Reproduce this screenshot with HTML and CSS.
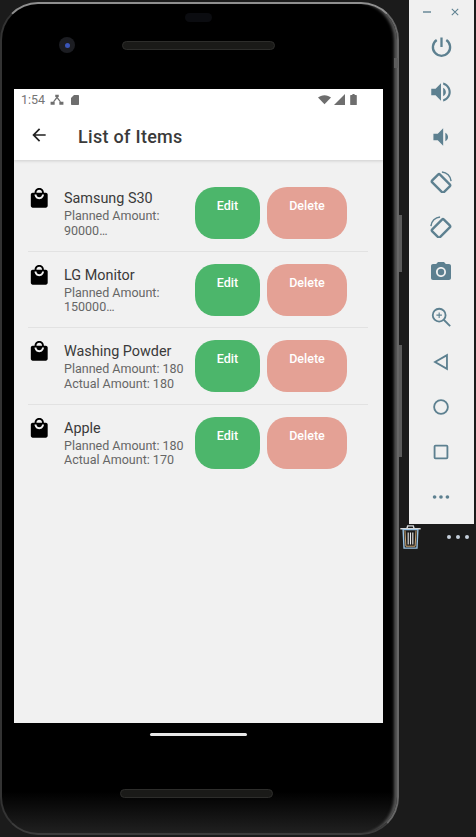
FILE: index.html
```html
<!DOCTYPE html>
<html lang="en">
<head>
  <meta charset="UTF-8" />
  <meta name="viewport" content="width=device-width, initial-scale=1.0"/>
  <title>List of Items</title>
  <link rel="stylesheet" href="styles.css">
</head>
<body>
  <svg class="sprites" width="0" height="0">
    <symbol id="bag" viewBox="0 0 24 24"><path d="M19 6h-2c0-2.76-2.24-5-5-5S7 3.24 7 6H5c-1.1 0-1.99.9-1.99 2L3 20c0 1.1.9 2 2 2h14c1.1 0 2-.9 2-2V8c0-1.1-.9-2-2-2zm-7-3c1.66 0 3 1.34 3 3H9c0-1.66 1.34-3 3-3zm0 10c-2.76 0-5-2.24-5-5h2c0 1.66 1.34 3 3 3s3-1.34 3-3h2c0 2.76-2.24 5-5 5z"/></symbol>
  </svg>

  <div class="phone">
    <div class="key power-key"></div>
    <div class="key upper-key"></div>
    <div class="key lower-key"></div>

    <div class="bezel-top">
      <div class="sensor"></div>
      <div class="camera-row">
        <div class="camera"><div class="lens"></div></div>
        <div class="speaker"></div>
      </div>
    </div>

    <div class="screen">
      <div class="header">
        <div class="status-bar">
          <span class="time">1:54</span>
          <svg class="status-icon" viewBox="0 0 24 24"><path d="M9 3h6v4H9z"/><path d="M11 7h2l6 8h-2.500L12 9.500 7.500 15H5z"/><path d="M1 15h7v5H1zM16 15h7v5h-7z"/></svg>
          <svg class="status-icon sd" viewBox="0 0 24 24"><path d="M18 2h-8L4 8v12c0 1.100.9 2 2 2h12c1.100 0 2-.9 2-2V4c0-1.100-.9-2-2-2z"/></svg>
          <span class="status-right">
            <svg class="wifi" viewBox="0 0 24 18"><path d="M12 17 0 4.500C3 1.800 7.300 0 12 0s9 1.800 12 4.500z"/></svg>
            <svg class="signal" viewBox="0 0 20 20"><path d="M0 20 20 0v20z"/></svg>
            <svg class="battery" viewBox="0 0 12 20"><path d="M4 0h4v2h3c.6 0 1 .4 1 1v16c0 .6-.4 1-1 1H1c-.6 0-1-.4-1-1V3c0-.6.4-1 1-1h3z"/></svg>
          </span>
        </div>
        <div class="app-bar">
          <svg class="back" viewBox="0 0 24 24"><path d="M20 11H7.830l5.590-5.590L12 4l-8 8 8 8 1.410-1.410L7.830 13H20v-2z"/></svg>
          <h1>List of Items</h1>
        </div>
      </div>

      <div class="list">
        <div class="item">
          <svg class="bag"><use href="#bag"/></svg>
          <div class="info">
            <div class="name">Samsung S30</div>
            <div class="amount">Planned Amount: 90000…</div>
          </div>
          <button class="btn edit">Edit</button>
          <button class="btn delete">Delete</button>
        </div>
        <div class="item">
          <svg class="bag"><use href="#bag"/></svg>
          <div class="info">
            <div class="name">LG Monitor</div>
            <div class="amount">Planned Amount: 150000…</div>
          </div>
          <button class="btn edit">Edit</button>
          <button class="btn delete">Delete</button>
        </div>
        <div class="item">
          <svg class="bag"><use href="#bag"/></svg>
          <div class="info">
            <div class="name">Washing Powder</div>
            <div class="amount">Planned Amount: 180</div>
            <div class="amount">Actual Amount: 180</div>
          </div>
          <button class="btn edit">Edit</button>
          <button class="btn delete">Delete</button>
        </div>
        <div class="item">
          <svg class="bag"><use href="#bag"/></svg>
          <div class="info">
            <div class="name">Apple</div>
            <div class="amount">Planned Amount: 180</div>
            <div class="amount">Actual Amount: 170</div>
          </div>
          <button class="btn edit">Edit</button>
          <button class="btn delete">Delete</button>
        </div>
      </div>
    </div>

    <div class="bezel-bottom">
      <div class="home-pill"></div>
      <div class="speaker bottom"></div>
    </div>
  </div>

  <div class="side">
    <div class="toolbar">
      <div class="window-row">
        <span class="minimize"></span>
        <svg class="close" viewBox="0 0 10 10"><path d="M1 1l8 8M9 1l-8 8"/></svg>
      </div>
      <div class="tool">
        <svg viewBox="0 0 24 24" class="line power"><path d="M12 2.500v10M7 5.200a9 9 0 1 0 10 0"/></svg>
      </div>
      <div class="tool">
        <svg viewBox="0 0 24 24" class="big"><path d="M3 9v6h4l5 5V4L7 9H3zm13.500 3c0-1.770-1.020-3.290-2.500-4.030v8.050c1.480-.73 2.500-2.250 2.500-4.020zM14 3.230v2.060c2.890.86 5 3.540 5 6.710s-2.110 5.850-5 6.710v2.060c4.010-.91 7-4.490 7-8.770s-2.990-7.860-7-8.770z"/></svg>
      </div>
      <div class="tool">
        <svg viewBox="0 0 24 24" class="big"><path d="M18.500 12c0-1.770-1.020-3.290-2.500-4.030v8.050c1.480-.73 2.500-2.250 2.500-4.020zM5 9v6h4l5 5V4L9 9H5z"/></svg>
      </div>
      <div class="tool">
        <svg viewBox="0 0 24 24"><rect class="hollow" x="6" y="4.500" width="12" height="18" rx="1.500" transform="rotate(-45 12 13.500)"/><path class="thin" d="M13 1a11 11 0 0 1 10 10"/></svg>
      </div>
      <div class="tool">
        <svg viewBox="0 0 24 24"><rect class="hollow" x="6" y="4.500" width="12" height="18" rx="1.500" transform="rotate(45 12 13.500)"/><path class="thin" d="M11 1A11 11 0 0 0 1 11"/></svg>
      </div>
      <div class="tool">
        <svg viewBox="0 0 24 24" class="camera-icon"><path d="M9 2 7.170 4H4c-1.100 0-2 .9-2 2v12c0 1.100.9 2 2 2h16c1.100 0 2-.9 2-2V6c0-1.100-.9-2-2-2h-3.170L15 2H9zm3 15c-2.760 0-5-2.240-5-5s2.240-5 5-5 5 2.240 5 5-2.240 5-5 5z"/><circle cx="12" cy="12" r="3.200"/></svg>
      </div>
      <div class="tool">
        <svg viewBox="0 0 24 24" class="line"><circle cx="10" cy="10" r="7"/><path d="M15 15l7 7"/><path class="thin-line" d="M10 7v6M7 10h6"/></svg>
      </div>
      <div class="tool">
        <svg viewBox="0 0 24 24" class="line"><path d="M18.500 4.500v15L5.500 12z"/></svg>
      </div>
      <div class="tool">
        <svg viewBox="0 0 24 24" class="line"><circle cx="12" cy="12" r="7.500"/></svg>
      </div>
      <div class="tool">
        <svg viewBox="0 0 24 24" class="line"><rect x="5" y="5" width="14" height="14" rx="1"/></svg>
      </div>
      <div class="tool">
        <svg viewBox="0 0 24 24"><circle cx="5" cy="12" r="2"/><circle cx="12" cy="12" r="2"/><circle cx="19" cy="12" r="2"/></svg>
      </div>
    </div>
    <div class="below">
      <svg class="trash" viewBox="0 0 22 26"><path class="trash-lid" d="M0 4h22M7 4l1-3h6l1 3"/><path class="trash-body" d="M3 5l1 20h14l1-20z"/><path class="trash-inner" d="M5 6l1 17h10l1-17"/><path class="trash-bars" d="M8.500 8v13M11 8v13M13.500 8v13"/></svg>
      <div class="dots"><i></i><i></i><i></i></div>
    </div>
  </div>
</body>
</html>
```

FILE: styles.css
```css
html, body {
  margin: 0;
  height: 100%;
}
body {
  width: 476px;
  height: 837px;
  overflow: hidden;
  display: flex;
  align-items: flex-start;
  background-color: #1b1b1b;
  font-family: Roboto, "Liberation Sans", sans-serif;
}
.sprites {
  display: block;
  width: 0;
  height: 0;
}

/* phone */
.phone {
  box-sizing: border-box;
  position: relative;
  flex: none;
  width: 399px;
  height: 833px;
  margin: 2px 10px 0 0;
  padding: 0 14px 0 12px;
  background: linear-gradient(#000 95%, #202020 100%);
  border: 2px solid #666;
  border-top-color: #8f8f8f;
  border-left-color: #333;
  border-bottom-color: #3c3c3c;
  border-radius: 38px;
  box-shadow: inset -5px 0 3px -2px #555;
}
.key {
  position: absolute;
  background: #5c5c5c;
}
.power-key {
  left: 392px;
  top: 54px;
  width: 4px;
  height: 10px;
}
.upper-key {
  left: 397px;
  top: 211px;
  width: 3px;
  height: 57px;
}
.lower-key {
  left: 397px;
  top: 341px;
  width: 3px;
  height: 112px;
}
.bezel-top {
  box-sizing: border-box;
  height: 85px;
  padding-top: 9px;
}
.sensor {
  width: 27px;
  height: 9px;
  margin-left: 171px;
  border-radius: 5px;
  background: #0b0c10;
}
.camera-row {
  display: flex;
  align-items: center;
  margin-top: 14px;
  height: 18px;
}
.camera {
  display: flex;
  align-items: center;
  justify-content: center;
  width: 16px;
  height: 16px;
  margin-left: 45px;
  border-radius: 50%;
  background: #1c1d22;
}
.lens {
  width: 5px;
  height: 5px;
  border-radius: 50%;
  background: #3a55b8;
}
.speaker {
  box-sizing: border-box;
  width: 153px;
  height: 9px;
  margin-left: 47px;
  border-radius: 5px;
  border: 1px solid #2d2d2b;
  background: #1a1a18;
}
.speaker.bottom {
  margin: 63px auto 0 106px;
}

/* app screen */
.screen {
  width: 369px;
  height: 634px;
  background-color: #f1f1f1;
  overflow: hidden;
}
.header {
  background: white;
  box-shadow: 0 1px 3px rgba(0,0,0,0.15);
}
.status-bar {
  display: flex;
  align-items: center;
  height: 21px;
  padding: 0 7px;
  color: #757575;
  font-size: 12.5px;
}
.time {
  margin-right: 5px;
}
.status-icon {
  width: 14px;
  height: 14px;
  fill: #6e6e6e;
}
.status-icon.sd {
  margin-left: 5px;
  width: 12px;
  height: 12px;
}
.status-right {
  display: flex;
  align-items: center;
  gap: 3px;
  margin-left: auto;
  padding-right: 19px;
}
.status-right svg {
  fill: #6e6e6e;
}
.wifi {
  width: 13px;
  height: 10px;
}
.signal {
  width: 11px;
  height: 11px;
}
.battery {
  width: 7px;
  height: 11px;
  margin-left: 2px;
}
.app-bar {
  display: flex;
  align-items: center;
  height: 50px;
}
.back {
  width: 20px;
  height: 20px;
  margin-left: 15px;
  fill: #212121;
}
.app-bar h1 {
  margin: 0 0 0 29px;
  padding-top: 2px;
  font-size: 18px;
  font-weight: 500;
  letter-spacing: 0.3px;
  color: #3a3a3a;
}
.list {
  margin: 15px 15px 0 14px;
}
.item {
  box-sizing: border-box;
  display: flex;
  align-items: flex-start;
  height: 76.5px;
  padding-top: 12px;
  border-bottom: 1px solid #e2e2e2;
}
.item:last-child {
  border-bottom: none;
}
.bag {
  flex: none;
  width: 22.5px;
  height: 22.5px;
  margin-right: 13.5px;
  fill: #000;
}
.info {
  flex: none;
  width: 125px;
  margin-right: 6px;
  padding-top: 3px;
}
.name {
  font-size: 14.4px;
  line-height: 17px;
  margin-bottom: 2px;
  color: #3a3a3a;
}
.amount {
  font-size: 12.5px;
  line-height: 14.6px;
  color: #666;
}
.btn {
  flex: none;
  display: flex;
  justify-content: center;
  height: 52px;
  padding: 12px 0 0;
  border: none;
  border-radius: 20px;
  color: white;
  font-family: inherit;
  font-size: 12.5px;
  font-weight: 500;
  line-height: 14px;
}
.edit {
  width: 65px;
  margin-right: 7px;
  background: #4cb66b;
}
.delete {
  width: 80px;
  background: #e4a195;
}

.bezel-bottom {
  height: 110px;
}
.home-pill {
  position: relative;
  top: 10px;
  width: 97px;
  height: 3px;
  margin-left: 136px;
  border-radius: 2px;
  background: #e8e8e8;
}

/* emulator toolbar */
.side {
  flex: none;
  width: 65px;
}
.toolbar {
  height: 524px;
  background: #f0f0f0;
  color: #5d8090;
}
.window-row {
  display: flex;
  align-items: center;
  justify-content: space-between;
  height: 24px;
  padding: 0 15px 0 14px;
}
.minimize {
  width: 8px;
  height: 1.500px;
  background: #8ba3ae;
}
.close {
  width: 8px;
  height: 8px;
  stroke: #5d8090;
  stroke-width: 1.300;
  fill: none;
}
.tool {
  display: flex;
  align-items: center;
  justify-content: center;
  height: 45px;
  padding-right: 1px;
}
.tool svg {
  flex: none;
  width: 22px;
  height: 22px;
  fill: #5d8090;
}
.tool svg.big {
  width: 26px;
  height: 26px;
}
.tool svg.camera-icon {
  width: 24px;
  height: 24px;
}
.tool svg.line {
  fill: none;
  stroke: #5d8090;
  stroke-width: 2;
}
.tool svg.power {
  width: 23px;
  height: 23px;
  stroke-width: 2.400;
}
.thin-line {
  stroke-width: 1.200;
}
.hollow {
  fill: none;
  stroke: #5d8090;
  stroke-width: 2.600;
}
.thin {
  fill: none;
  stroke: #5d8090;
  stroke-width: 1.600;
}
.below {
  display: flex;
  align-items: center;
  height: 26px;
}
.trash {
  width: 21px;
  height: 24px;
  margin-left: -9px;
  fill: none;
}
.trash-lid {
  stroke: #d5d8da;
  stroke-width: 1.500;
}
.trash-body {
  stroke: #9cc4e4;
  stroke-width: 1.500;
}
.trash-inner {
  stroke: #d9b078;
  stroke-width: 1;
}
.trash-bars {
  stroke: #e8e8e8;
  stroke-width: 1.200;
}
.dots {
  display: flex;
  gap: 5px;
  margin-left: 26px;
}
.dots i {
  width: 4px;
  height: 4px;
  border-radius: 50%;
  background: #c6d0dc;
}
```
